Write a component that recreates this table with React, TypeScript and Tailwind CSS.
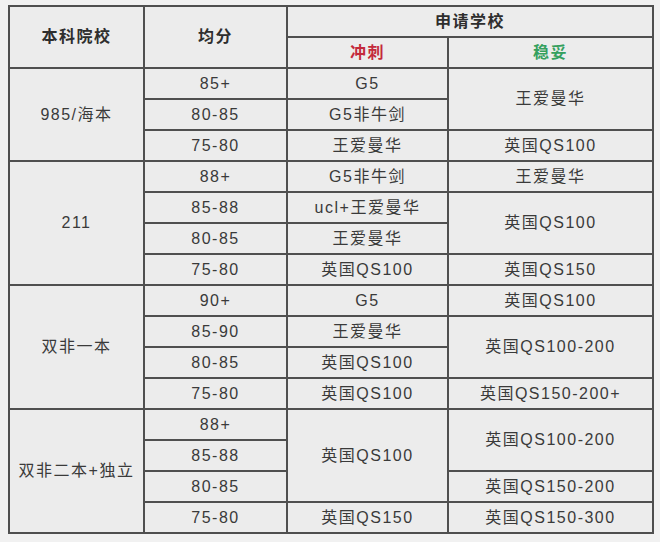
const rows: { group?: [string, number]; score: string; sprint?: [string, number]; safe?: [string, number] }[] = [
  { group: ["985/海本", 3], score: "85+", sprint: ["G5", 1], safe: ["王爱曼华", 2] },
  { score: "80-85", sprint: ["G5非牛剑", 1] },
  { score: "75-80", sprint: ["王爱曼华", 1], safe: ["英国QS100", 1] },
  { group: ["211", 4], score: "88+", sprint: ["G5非牛剑", 1], safe: ["王爱曼华", 1] },
  { score: "85-88", sprint: ["ucl+王爱曼华", 1], safe: ["英国QS100", 2] },
  { score: "80-85", sprint: ["王爱曼华", 1] },
  { score: "75-80", sprint: ["英国QS100", 1], safe: ["英国QS150", 1] },
  { group: ["双非一本", 4], score: "90+", sprint: ["G5", 1], safe: ["英国QS100", 1] },
  { score: "85-90", sprint: ["王爱曼华", 1], safe: ["英国QS100-200", 2] },
  { score: "80-85", sprint: ["英国QS100", 1] },
  { score: "75-80", sprint: ["英国QS100", 1], safe: ["英国QS150-200+", 1] },
  { group: ["双非二本+独立", 4], score: "88+", sprint: ["英国QS100", 3], safe: ["英国QS100-200", 2] },
  { score: "85-88" },
  { score: "80-85", safe: ["英国QS150-200", 1] },
  { score: "75-80", sprint: ["英国QS150", 1], safe: ["英国QS150-300", 1] },
];

const cell = "border-2 border-[#4f4f4f] text-center align-middle p-0";

export default function App() {
  return (
    <div
      className="w-[660px] h-[542px] bg-[#f1f1f1] pt-[5px] pl-[8px] text-[16px] tracking-[1.5px] text-[#3a3a3a]"
      style={{ fontFamily: '"Liberation Sans", "Noto Sans CJK SC", sans-serif' }}
    >
      <table className="w-[644px] table-fixed border-collapse bg-[#ececec]">
        <colgroup>
          <col className="w-[135px]" />
          <col className="w-[143px]" />
          <col className="w-[161px]" />
          <col className="w-[205px]" />
        </colgroup>
        <thead>
          <tr className="h-[31px]">
            <th rowSpan={2} className={`${cell} font-bold text-[#2e2e2e]`}>本科院校</th>
            <th rowSpan={2} className={`${cell} font-bold text-[#2e2e2e]`}>均分</th>
            <th colSpan={2} className={`${cell} font-bold text-[#2e2e2e]`}>申请学校</th>
          </tr>
          <tr className="h-[31px]">
            <th className={`${cell} font-bold text-[#c42a3c]`}>冲刺</th>
            <th className={`${cell} font-bold text-[#35a05e]`}>稳妥</th>
          </tr>
        </thead>
        <tbody>
          {rows.map((r, i) => (
            <tr key={i} className="h-[31px]">
              {r.group && (
                <td rowSpan={r.group[1]} className={cell}>{r.group[0]}</td>
              )}
              <td className={cell}>{r.score}</td>
              {r.sprint && (
                <td rowSpan={r.sprint[1]} className={cell}>{r.sprint[0]}</td>
              )}
              {r.safe && (
                <td rowSpan={r.safe[1]} className={cell}>{r.safe[0]}</td>
              )}
            </tr>
          ))}
        </tbody>
      </table>
    </div>
  );
}
